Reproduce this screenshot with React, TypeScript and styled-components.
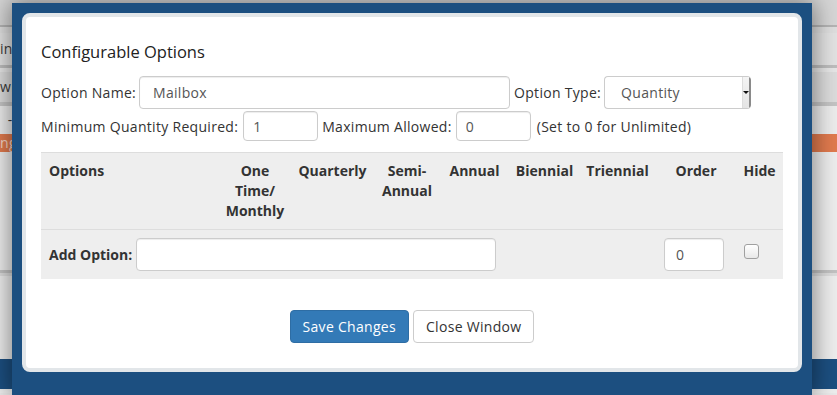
import React from 'react';
import styled, { createGlobalStyle } from 'styled-components';

const GlobalStyle = createGlobalStyle`
  html, body {
    margin: 0;
    padding: 0;
  }
  body {
    font-family: "Open Sans", "Liberation Sans", sans-serif;
    font-size: 14px;
    letter-spacing: 0.3px;
    color: #333;
    overflow: hidden;
  }
  * {
    box-sizing: border-box;
  }
`;

const Page = styled.div`
  position: relative;
  width: 837px;
  height: 395px;
  overflow: hidden;
`;

// the admin page that sits behind the popup
const Backdrop = styled.div`
  display: flex;
  flex-direction: column;
  height: 395px;
  background: #e9e9e9;
`;

const Band = styled.div<{ $h: number; $bg: string; $color?: string }>`
  flex-shrink: 0;
  height: ${(p) => p.$h}px;
  line-height: ${(p) => p.$h}px;
  background: ${(p) => p.$bg};
  color: ${(p) => p.$color || '#3a3a3a'};
  font-size: 14px;
  white-space: nowrap;
  overflow: hidden;
`;

const Frame = styled.div`
  position: absolute;
  left: 12px;
  top: 3px;
  width: 800px;
  height: 392px;
  padding: 10px;
  background: #1c4f80;
  box-shadow: 0 0 22px 2px rgba(0, 0, 0, 0.45);
`;

const Panel = styled.div`
  background: #fff;
  border: 4px solid #e2e6e9;
  border-radius: 8px;
  padding: 15px 15px 25px;
`;

const Title = styled.h3`
  margin: 10px 0 14px;
  font-size: 16.5px;
  line-height: 20px;
  font-weight: 400;
  letter-spacing: 0;
  color: #222;
`;

const FieldRow = styled.div<{ $top?: number }>`
  display: flex;
  align-items: center;
  margin-top: ${(p) => p.$top || 0}px;
`;

const Label = styled.span<{ $gap?: number }>`
  margin-right: ${(p) => (p.$gap === undefined ? 5 : p.$gap)}px;
  white-space: nowrap;
`;

const TextInput = styled.input<{ $w: number; $h?: number; $pad?: number }>`
  width: ${(p) => p.$w}px;
  height: ${(p) => p.$h || 33}px;
  padding: 0 ${(p) => p.$pad || 13}px;
  margin-right: 4px;
  border: 1px solid #ccc;
  border-radius: 4px;
  box-shadow: inset 0 1px 1px rgba(0, 0, 0, 0.075);
  font-family: inherit;
  font-size: 14px;
  letter-spacing: 0.3px;
  color: #555;
  background: #fff;
  outline: none;
`;

const Select = styled.div`
  display: flex;
  align-items: stretch;
  width: 147px;
  height: 33px;
  margin-top: -1px;
  border: 1px solid #ccc;
  border-right: 0;
  border-radius: 4px;
  background: #fff;
  color: #555;
  overflow: hidden;
`;

const SelectText = styled.span`
  flex: 1;
  padding-left: 16px;
  line-height: 31px;
`;

const SelectArrow = styled.span`
  width: 9px;
  display: flex;
  align-items: center;
  justify-content: center;
  background: linear-gradient(#f4f4f4, #e4e4e4);
  border-left: 1px solid #ddd;
  border-right: 2px solid #8a8a8a;

  &::after {
    content: '';
    border-left: 3px solid transparent;
    border-right: 3px solid transparent;
    border-top: 3px solid #111;
  }
`;

const Note = styled.span`
  margin-left: 2px;
`;

const Table = styled.table`
  width: 100%;
  margin-top: 11px;
  border-collapse: collapse;
  table-layout: fixed;
`;

const Th = styled.th<{ $left?: boolean }>`
  padding: 8px ${(p) => (p.$left ? 8 : 4)}px;
  line-height: 20px;
  vertical-align: top;
  text-align: ${(p) => (p.$left ? 'left' : 'center')};
  font-weight: 700;
  letter-spacing: 0;
  color: #333;
  background: #eee;
  border-top: 1px solid #ddd;
`;

const Td = styled.td`
  padding: 8px;
  vertical-align: top;
  background: #eee;
  border-top: 1px solid #ddd;
`;

const AddCell = styled.div`
  display: flex;
  align-items: center;
  font-weight: 700;
  letter-spacing: 0;
`;

const Check = styled.input`
  appearance: none;
  display: block;
  width: 15px;
  height: 15px;
  margin: 6px 0 0;
  border: 1px solid #a0a0a0;
  border-radius: 3px;
  background: linear-gradient(#fff, #e8e8e8);
`;

const Actions = styled.div`
  display: flex;
  justify-content: center;
  gap: 4px;
  margin-top: 31px;
`;

const Button = styled.button<{ $primary?: boolean }>`
  height: 33px;
  padding: 0 12px;
  border-radius: 4px;
  border: 1px solid ${(p) => (p.$primary ? '#2e6da4' : '#ccc')};
  background: ${(p) => (p.$primary ? '#337ab7' : '#fff')};
  color: ${(p) => (p.$primary ? '#fff' : '#333')};
  font-family: inherit;
  font-size: 14px;
  letter-spacing: 0.3px;
  line-height: 31px;
`;

const columns = [179, 70, 85, 64, 71, 69, 77, 80, 47];

const App: React.FC = () => (
  <Page>
    <GlobalStyle />
    <Backdrop>
      <Band $h={25} $bg="#d6d6d6" />
      <Band $h={2} $bg="#b4b4b4" />
      <Band $h={6} $bg="#dedede" />
      <Band $h={32} $bg="#e2e2e2">
        in
      </Band>
      <Band $h={3} $bg="#bdbdbd" />
      <Band $h={4} $bg="#e6e6e6" />
      <Band $h={30} $bg="#dcdcdc">
        wr
      </Band>
      <Band $h={4} $bg="#c4c4c4" />
      <Band $h={28} $bg="#ececec">
        &nbsp;&nbsp;-
      </Band>
      <Band $h={18} $bg="#e07a4e" $color="#f6d6c6">
        ng
      </Band>
      <Band $h={118} $bg="#ededed" />
      <Band $h={3} $bg="#c2c2c2" />
      <Band $h={3} $bg="#dcdcdc" />
      <Band $h={83} $bg="#ededed" />
      <Band $h={30} $bg="#1c4f80" />
      <Band $h={4} $bg="#ededed" />
    </Backdrop>

    <Frame>
      <Panel>
        <Title>Configurable Options</Title>

        <FieldRow>
          <Label $gap={3}>Option Name:</Label>
          <TextInput $w={371} defaultValue="Mailbox" />
          <Label $gap={3}>Option Type:</Label>
          <Select>
            <SelectText>Quantity</SelectText>
            <SelectArrow />
          </Select>
        </FieldRow>

        <FieldRow $top={2}>
          <Label>Minimum Quantity Required:</Label>
          <TextInput $w={75} $h={30} $pad={9} defaultValue="1" />
          <Label $gap={4}>Maximum Allowed:</Label>
          <TextInput $w={75} $h={30} $pad={9} defaultValue="0" />
          <Note>(Set to 0 for Unlimited)</Note>
        </FieldRow>

        <Table>
          <colgroup>
            {columns.map((w, i) => (
              <col key={i} style={{ width: w }} />
            ))}
          </colgroup>
          <thead>
            <tr>
              <Th $left>Options</Th>
              <Th>One Time/ Monthly</Th>
              <Th>Quarterly</Th>
              <Th>Semi-Annual</Th>
              <Th>Annual</Th>
              <Th>Biennial</Th>
              <Th>Triennial</Th>
              <Th>Order</Th>
              <Th>Hide</Th>
            </tr>
          </thead>
          <tbody>
            <tr>
              <Td colSpan={5}>
                <AddCell>
                  <Label $gap={4}>Add Option:</Label>
                  <TextInput $w={360} />
                </AddCell>
              </Td>
              <Td colSpan={2} />
              <Td>
                <TextInput $w={60} $pad={11} defaultValue="0" />
              </Td>
              <Td>
                <Check type="checkbox" />
              </Td>
            </tr>
          </tbody>
        </Table>

        <Actions>
          <Button $primary>Save Changes</Button>
          <Button>Close Window</Button>
        </Actions>
      </Panel>
    </Frame>
  </Page>
);

export default App;
